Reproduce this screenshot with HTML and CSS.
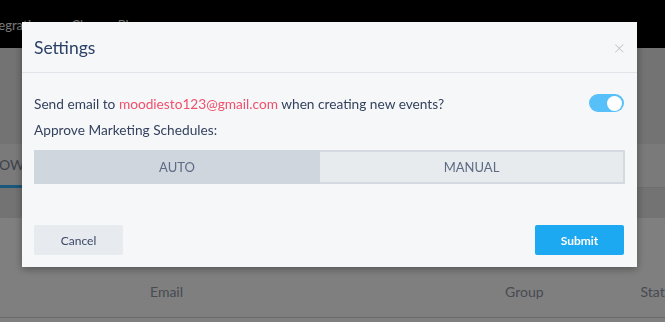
FILE: index.html
```html
<!DOCTYPE html>
<html lang="en">
<head>
    <meta charset="UTF-8">
    <meta name="viewport" content="width=device-width, initial-scale=1.0">
    <title>Settings</title>
    <link rel="stylesheet" href="styles.css">
</head>
<body>
    <div class="page">
        <nav class="topnav">
            <a class="nav-link first">Integrations</a>
            <a class="nav-link">Change Plan</a>
        </nav>
        <div class="page-head"></div>
        <div class="tabs">
            <span class="tab active">FOLLOW</span>
        </div>
        <div class="toolbar"></div>
        <div class="table-head">
            <span class="col col-email">Email</span>
            <span class="col col-group">Group</span>
            <span class="col col-status">Status</span>
        </div>
    </div>

    <div class="overlay">
        <div class="modal">
            <div class="modal-header">
                <h2>Settings</h2>
                <span class="close">&times;</span>
            </div>
            <div class="modal-body">
                <div class="row">
                    <p>Send email to <span class="email">moodiesto123@gmail.com</span> when creating new events?</p>
                    <label class="toggle"><span class="knob"></span></label>
                </div>
                <div class="row">
                    <p>Approve Marketing Schedules:</p>
                </div>
                <div class="segmented">
                    <button class="seg active">AUTO</button>
                    <button class="seg">MANUAL</button>
                </div>
            </div>
            <div class="modal-footer">
                <button class="btn btn-cancel">Cancel</button>
                <button class="btn btn-submit">Submit</button>
            </div>
        </div>
    </div>
</body>
</html>
```

FILE: styles.css
```css
* { margin: 0; padding: 0; box-sizing: border-box; }

body {
    font-family: 'Lato', 'Open Sans', sans-serif;
    background: #fff;
    width: 665px;
    height: 322px;
    overflow: hidden;
}

/* page behind the dialog */
.topnav {
    height: 48px;
    background: #000;
    display: flex;
    align-items: center;
    gap: 20px;
    padding-top: 2px;
}
.nav-link { color: #f0f0f0; font-size: 13px; }
.nav-link.first { margin-left: -17px; }

.page-head { height: 96px; background: #e6e6e6; }

.tabs {
    height: 44px;
    background: #f4f4f4;
    border-bottom: 1px solid #dcdcdc;
    display: flex;
}
.tab {
    margin-left: -34px;
    font-size: 14px;
    color: #7c8796;
    line-height: 42px;
    border-bottom: 3px solid #35b0fa;
    height: 44px;
    padding: 0 4px 0 0;
}

.toolbar { height: 30px; background: #e6e6e6; }

.table-head {
    height: 100px;
    background: #fefefe;
    border-bottom: 1px solid #d4d4d4;
    display: flex;
    align-items: flex-end;
    padding-bottom: 17px;
    font-size: 14px;
    color: #8e96a4;
}
.col-email { margin-left: 150px; }
.col-group { margin-left: 322px; }
.col-status { margin-left: 97px; }

/* dialog */
.overlay {
    position: fixed;
    inset: 0;
    background: rgba(0, 0, 0, 0.5);
}

.modal {
    position: absolute;
    left: 22px;
    top: 22px;
    width: 615px;
    background: #f6f7f9;
    box-shadow: 0 2px 8px rgba(0, 0, 0, 0.35);
    color: #34425e;
}

.modal-header {
    height: 51px;
    border-bottom: 1px solid #e1e4e8;
    display: flex;
    align-items: center;
    justify-content: space-between;
    padding: 0 12px;
}
.modal-header h2 {
    font-size: 17.5px;
    font-weight: 400;
    color: #2b4166;
}
.close {
    font-size: 20px;
    color: #c2c6cb;
    font-weight: 300;
}

.modal-body { padding: 20px 12px 28px; }

.row {
    display: flex;
    align-items: center;
    justify-content: space-between;
    height: 20px;
    font-size: 13.7px;
}
.row + .row { margin-top: 6px; }
.email { color: #f0506c; }

.toggle {
    width: 35px;
    height: 18px;
    border-radius: 9px;
    background: #58c0f9;
    display: flex;
    justify-content: flex-end;
    align-items: center;
    padding: 0 2px;
    margin-right: 1px;
}
.knob {
    width: 15px;
    height: 15px;
    border-radius: 50%;
    background: #fff;
}

.segmented {
    display: flex;
    margin-top: 11px;
    height: 34px;
}
.seg {
    font-family: inherit;
    font-size: 13px;
    color: #5d6b84;
    border: 2px solid #d4dae0;
    border-left: none;
    background: #e8ebee;
    flex: 1;
}
.seg.active {
    flex: 0 0 286px;
    background: #cfd6de;
    border: none;
}

.modal-footer {
    display: flex;
    justify-content: space-between;
    padding: 13px 13px 12px 12px;
}
.btn {
    font-family: inherit;
    font-size: 12px;
    width: 89px;
    height: 30px;
    border: none;
    border-radius: 2px;
}
.btn-cancel { background: #e7eaee; color: #3a4764; }
.btn-submit { background: #1da9f1; color: #fff; font-weight: 700; }
```
